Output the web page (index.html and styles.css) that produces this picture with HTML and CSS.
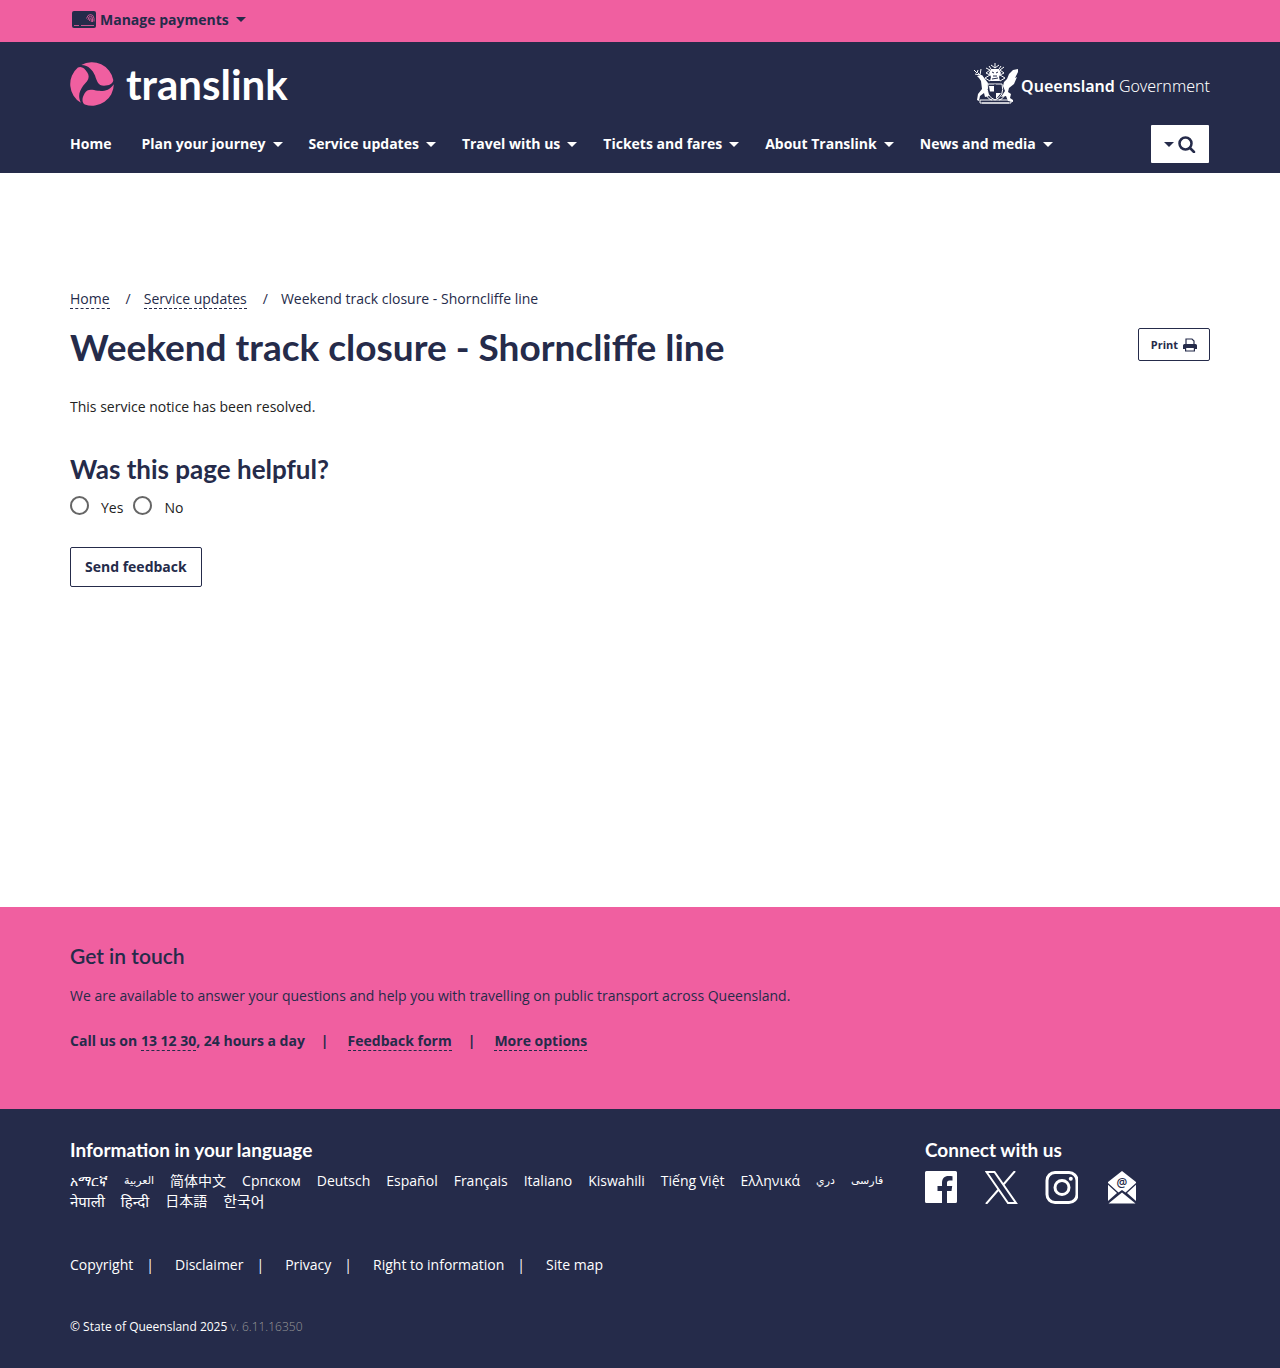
FILE: index.html
```html
<!DOCTYPE html>
<html lang="en">
<head>
<meta charset="utf-8">
<meta name="viewport" content="width=device-width, initial-scale=1">
<title>Weekend track closure - Shorncliffe line | Translink</title>
<link rel="stylesheet" href="styles.css">
</head>
<body>
<div class="top-bar">
  <div class="container">
    <button class="payments" type="button">
      <svg class="card-icon" viewBox="0 0 24 18" aria-hidden="true"><rect width="24" height="17" rx="2" fill="#252b4a"/><path d="M2 14.500h5M9 14.500h13" stroke="#f05fa0" stroke-width=".8"/><g fill="none" stroke="#f05fa0" stroke-width=".8"><path d="M14.500 7.500q1-4 4-4t3.500 4v3M16 9q.5-4 2.500-3.800T20.500 8v3M17.500 10q.2-3 1-3t.8 2v2"/></g></svg>
      <span>Manage payments</span>
      <span class="caret"></span>
    </button>
  </div>
</div>
<header class="site-header">
  <div class="container">
    <div class="brand-row">
      <a class="logo" href="#">
        <svg class="logo-mark" viewBox="0 0 44 44" aria-hidden="true"><g fill="#f05fa0"><path d="M11.300 3C19 3.500 22.500 8 25 13.500C27 19.500 28 23.700 34 23.700C39 23.700 43 22 43.300 18A21.700 21.700 0 0 0 11.300 3Z"/><path d="M11.300 3C19 3.500 22.500 8 25 13.500C27 19.500 28 23.700 34 23.700C39 23.700 43 22 43.300 18A21.700 21.700 0 0 0 11.300 3Z" transform="rotate(120 22 22)"/><path d="M11.300 3C19 3.500 22.500 8 25 13.500C27 19.500 28 23.700 34 23.700C39 23.700 43 22 43.300 18A21.700 21.700 0 0 0 11.300 3Z" transform="rotate(240 22 22)"/></g></svg>
        <span class="logo-text">translink</span>
      </a>
      <a class="gov" href="#">
        <svg class="crest" viewBox="0 0 44 42" aria-hidden="true">
          <g fill="none" stroke="#fff" stroke-width="1">
            <path d="M0 7l3 3 1-3M1 11l5 1 1-6M4 10l3 3M6 37h31v3H6zM8 40h27M21 0v5M17 2l4 3 4-3M12 5l4 2-4 3 4 2-5 3 5 3M30 4l-4 3 4 3-4 2 5 3-5 3M15 3l2 3M27 3l-2 3"/>
            <path d="M14 21q-3 12 7 16 10-4 7-16zM12 32q3 5 6 5M31 32q-3 5-6 5"/>
          </g>
          <g fill="#fff">
            <path d="M3 13l5-1 3 4 3 4-1 6 2 7-4 1-1-4-4 3-1 5-2-1 1-6 4-5-1-8-2-3z"/>
            <path d="M44 6l-5 1-4 4-2 5-3 3-1 4 2 5-4 6 5-1 2 5 5 1v-2l-3-2 1-4-3-2 1-4 5-4 3-7-2 1 3-6z"/>
            <path d="M17 6h8l2 4-2 4 1 4H16l1-4-2-4zM15 23h5v6h-4zM22 30h5l-5 6z"/>
          </g>
          <path d="M18 9l2 1M24 9l-2 1M19 13h4M18 16l6-1M21 21v15M15 29h12" stroke="#252b4a" fill="none"/>
        </svg>
        <span class="gov-text"><b>Queensland</b> Government</span>
      </a>
    </div>
    <div class="nav-row">
      <nav class="main-nav" aria-label="Main">
        <a href="#">Home</a>
        <a href="#">Plan your journey<span class="caret"></span></a>
        <a href="#">Service updates<span class="caret"></span></a>
        <a href="#">Travel with us<span class="caret"></span></a>
        <a href="#">Tickets and fares<span class="caret"></span></a>
        <a href="#">About Translink<span class="caret"></span></a>
        <a href="#">News and media<span class="caret"></span></a>
      </nav>
      <button class="search" type="button" aria-label="Search">
        <span class="caret"></span>
        <svg class="search-icon" viewBox="0 0 18 18" aria-hidden="true"><circle cx="7.500" cy="8.500" r="6" fill="none" stroke="#252b4a" stroke-width="2.500"/><path d="M12 13l4 4" stroke="#252b4a" stroke-width="2.500" stroke-linecap="round"/></svg>
      </button>
    </div>
  </div>
</header>
<main class="container page">
  <nav aria-label="Breadcrumb">
    <ol class="breadcrumb">
      <li><a class="dashed" href="#">Home</a></li>
      <li><a class="dashed" href="#">Service updates</a></li>
      <li>Weekend track closure - Shorncliffe line</li>
    </ol>
  </nav>
  <div class="title-row">
    <h1>Weekend track closure - Shorncliffe line</h1>
    <button class="button print" type="button">Print
      <svg class="print-icon" viewBox="0 0 14 14" aria-hidden="true"><path d="M3 6V1h6l2 2v3" fill="none" stroke="#252b4a" stroke-width="1.200"/><path d="M1.500 6h11a1.500 1.500 0 0 1 1.500 1.500V11H0V7.500A1.500 1.500 0 0 1 1.500 6Z" fill="#252b4a"/><path d="M2.600 9.500v3.500h8.800V9.500Z" fill="#fff" stroke="#252b4a" stroke-width="1.200"/></svg>
    </button>
  </div>
  <p class="notice">This service notice has been resolved.</p>
  <form class="feedback">
    <fieldset>
      <legend>Was this page helpful?</legend>
      <div class="choices">
        <label><input type="radio" name="helpful" value="yes"><span>Yes</span></label>
        <label><input type="radio" name="helpful" value="no"><span>No</span></label>
      </div>
    </fieldset>
    <button class="button send" type="button">Send feedback</button>
  </form>
</main>
<section class="touch">
  <div class="container">
    <h2>Get in touch</h2>
    <p>We are available to answer your questions and help you with travelling on public transport across Queensland.</p>
    <ul class="piped contact">
      <li>Call us on <a class="dashed" href="#">13 12 30</a>, 24 hours a day</li>
      <li><a class="dashed" href="#">Feedback form</a></li>
      <li><a class="dashed" href="#">More options</a></li>
    </ul>
  </div>
</section>
<footer class="site-footer">
  <div class="container">
    <div class="footer-top">
      <div class="languages">
        <h2>Information in your language</h2>
        <div class="language-list">
          <a href="#" lang="am">አማርኛ</a>
          <a href="#" lang="ar" class="arabic">العربية</a>
          <a href="#" lang="zh-Hans">简体中文</a>
          <a href="#" lang="sr">Српском</a>
          <a href="#" lang="de">Deutsch</a>
          <a href="#" lang="es">Español</a>
          <a href="#" lang="fr">Français</a>
          <a href="#" lang="it">Italiano</a>
          <a href="#" lang="sw">Kiswahili</a>
          <a href="#" lang="vi">Tiếng Việt</a>
          <a href="#" lang="el">Ελληνικά</a>
          <a href="#" lang="prs" class="arabic">دري</a>
          <a href="#" lang="fa" class="arabic">فارسی</a>
          <a href="#" lang="ne" class="large">नेपाली</a>
          <a href="#" lang="hi" class="large">हिन्दी</a>
          <a href="#" lang="ja">日本語</a>
          <a href="#" lang="ko" class="large">한국어</a>
        </div>
      </div>
      <div class="connect">
        <h2>Connect with us</h2>
        <div class="social">
          <a href="#" aria-label="Facebook"><svg viewBox="0 0 33 33"><path d="M1.500 0h29A1.500 1.500 0 0 1 32 1.500v29a1.500 1.500 0 0 1-1.500 1.500H22V20h4.500l.7-5H22v-3c0-1.500.6-2.500 2.600-2.500h2.900V5.200C27 5.100 25.500 5 23.500 5c-4 0-6.500 2.500-6.500 7v3h-4.500v5H17v12H1.500A1.500 1.500 0 0 1 0 30.500v-29A1.500 1.500 0 0 1 1.500 0Z" fill="#fff"/></svg></a>
          <a href="#" aria-label="X"><svg viewBox="0 0 33 33"><path d="M1.500 1h8L31 32h-8ZM30 0 18 14M14 18 1 33" fill="none" stroke="#fff" stroke-width="2"/></svg></a>
          <a href="#" aria-label="Instagram"><svg viewBox="0 0 33 33"><rect x="2" y="1.500" width="30" height="30" rx="8" fill="none" stroke="#fff" stroke-width="3"/><circle cx="17" cy="16.500" r="7" fill="none" stroke="#fff" stroke-width="3"/><circle cx="25.800" cy="7.700" r="2" fill="#fff"/></svg></a>
          <a href="#" aria-label="Email"><svg viewBox="0 0 33 33"><path d="M17 0 31 11v1L20.500 21.500 17 19l-3.500 2.500L3 12v-1ZM3 13.800 12 22 3 30ZM31 13.800V30l-9-8ZM3.500 32.500 17 21.500l13.500 11Z" fill="#fff"/><text x="17" y="16" class="at">@</text></svg></a>
        </div>
      </div>
    </div>
    <ul class="piped legal">
      <li><a href="#">Copyright</a></li>
      <li><a href="#">Disclaimer</a></li>
      <li><a href="#">Privacy</a></li>
      <li><a href="#">Right to information</a></li>
      <li><a href="#">Site map</a></li>
    </ul>
    <p class="copyright">© State of Queensland 2025 <span>v. 6.11.16350</span></p>
  </div>
</footer>
</body>
</html>
```
FILE: styles.css
```css
:root {
  --navy: #252b4a;
  --pink: #f05fa0;
  --heading: Lato, "Open Sans", sans-serif;
}
* { box-sizing: border-box; }
body {
  margin: 0;
  min-height: 100vh;
  display: flex;
  flex-direction: column;
  background: #fff;
  color: #222;
  font: 14px/20px "Open Sans", "Noto Sans", "Noto Sans CJK SC", sans-serif;
}
h1, h2, p, ul, ol { margin: 0; padding: 0; }
h1, h2, legend { font-variant-ligatures: none; }
ul, ol { list-style: none; }
a { color: inherit; text-decoration: none; }
button { font: inherit; color: inherit; cursor: pointer; }
svg { display: block; }
.container {
  width: 100%;
  max-width: 1170px;
  margin: 0 auto;
  padding: 0 15px;
}
.caret {
  display: inline-block;
  border: 5px solid transparent;
  border-top-color: currentColor;
  border-bottom: 0;
}
.dashed { border-bottom: 1px dashed currentColor; }

.top-bar { background: var(--pink); color: var(--navy); height: 42px; }
.payments {
  display: flex;
  align-items: center;
  gap: 4px;
  height: 39px;
  padding: 0 2px;
  border: 0;
  background: none;
  font-weight: 700;
}
.payments .caret { margin-left: 3px; }
.card-icon { width: 24px; height: 18px; }

.site-header { background: var(--navy); color: #fff; padding: 20px 0 10px; }
.brand-row, .nav-row, .title-row {
  display: flex;
  justify-content: space-between;
}
.brand-row { align-items: center; height: 44px; }
.logo { display: flex; align-items: center; gap: 12px; }
.logo-mark { width: 44px; height: 44px; }
.logo-text { font: 700 42px/44px var(--heading); }
.gov { display: flex; align-items: center; gap: 3px; }
.crest { width: 44px; height: 42px; }
.gov-text { padding-top: 3px; font: 300 16px/24px "Noto Sans", sans-serif; }
.gov-text b { font-weight: 600; }
.nav-row { margin-top: 19px; align-items: center; }
.main-nav { display: flex; gap: 26px; font-weight: 700; }
.main-nav a { display: flex; align-items: center; }
.main-nav a:first-child { margin-right: 4px; }
.main-nav .caret { margin-left: 7px; }
.search {
  display: flex;
  align-items: center;
  justify-content: center;
  gap: 4px;
  width: 58px;
  height: 38px;
  margin-right: 1px;
  padding: 0;
  border: 0;
  border-radius: 1px;
  background: #fff;
  color: var(--navy);
}
.search-icon { width: 18px; height: 18px; }

.page { flex: 1; padding-top: 116px; padding-bottom: 48px; }
.breadcrumb { display: flex; flex-wrap: wrap; color: var(--navy); }
.breadcrumb li + li::before { content: "/"; padding: 0 13px 0 16px; }
.title-row { margin-top: 18px; align-items: flex-start; }
h1 { color: var(--navy); font: 700 37px/40px var(--heading); }
.button {
  border: 1px solid var(--navy);
  border-radius: 2px;
  background: #fff;
  color: var(--navy);
  font-weight: 700;
}
.print {
  display: flex;
  flex-shrink: 0;
  align-items: center;
  justify-content: center;
  gap: 5px;
  width: 72px;
  height: 33px;
  margin-top: 1px;
  padding: 0;
  font-size: 11px;
}
.print-icon { width: 14px; height: 14px; }
.notice { margin-top: 30px; }
.feedback { margin-top: 36px; }
fieldset { margin: 0; padding: 0; border: 0; }
legend { padding: 0; color: var(--navy); font: 700 26px/32px var(--heading); }
.choices { display: flex; gap: 10px; margin-top: 11px; }
.choices label { display: flex; gap: 12px; }
.choices span { padding-top: 2px; }
.choices input {
  appearance: none;
  width: 19px;
  height: 19px;
  margin: 0;
  border: 2px solid #666;
  border-radius: 50%;
}
.choices input:checked { background: radial-gradient(#666 40%, #fff 45%); }
.send { margin-top: 29px; height: 40px; padding: 0 14px; }

.touch { background: var(--pink); color: var(--navy); padding: 37px 0 58px; }
.touch h2 { font: 600 21px/24px var(--heading); }
.touch p { margin-top: 18px; }
.piped { display: flex; flex-wrap: wrap; }
.piped li + li::before { content: "|"; padding: 0 19px 0 16px; }
.contact { margin-top: 25px; font-weight: 700; }

.site-footer { background: var(--navy); color: #fff; padding: 29px 0 31px; }
.site-footer h2 { font: 700 19px/24px var(--heading); }
.footer-top { display: grid; grid-template-columns: 3fr 1fr; }
.language-list {
  display: flex;
  flex-wrap: wrap;
  column-gap: 16px;
  margin-top: 9px;
}
.arabic { font-family: "DejaVu Sans", sans-serif; font-size: 11px; }
.large { font-size: 15px; }
.social { display: flex; gap: 27px; margin-top: 9px; }
.social svg { width: 33px; height: 33px; }
.at { font: 600 12px "Open Sans", sans-serif; text-anchor: middle; fill: var(--navy); }
.legal { margin-top: 44px; }
.piped.legal li + li::before { padding: 0 21px 0 13px; }
.copyright { margin-top: 42px; font-size: 12px; }
.copyright span { color: #999; font-weight: 300; }
```
